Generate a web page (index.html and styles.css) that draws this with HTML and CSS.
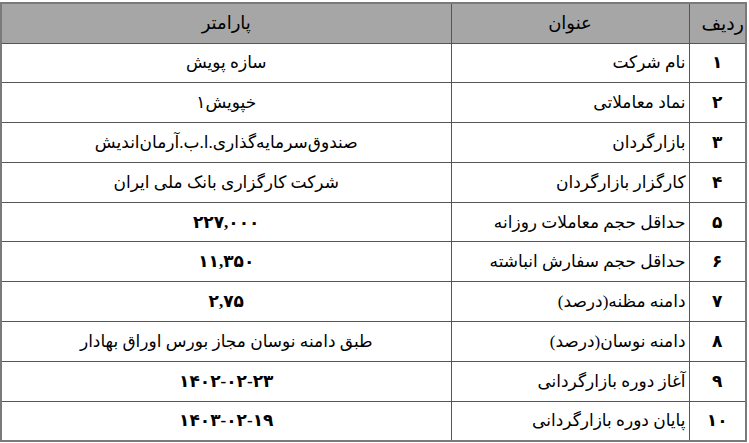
FILE: index.html
```html
<!DOCTYPE html>
<html lang="fa" dir="rtl">
<head>
<meta charset="utf-8">
<link rel="stylesheet" href="styles.css">
</head>
<body>
<table class="grid">
  <colgroup>
    <col class="c-num">
    <col class="c-title">
    <col class="c-param">
  </colgroup>
  <thead>
    <tr class="head">
      <th class="num-h">ردیف</th>
      <th>عنوان</th>
      <th>پارامتر</th>
    </tr>
  </thead>
  <tbody>
    <tr><td class="num">۱</td><td class="title">نام شرکت</td><td class="param">سازه پویش</td></tr>
    <tr><td class="num">۲</td><td class="title">نماد معاملاتی</td><td class="param">خپویش۱</td></tr>
    <tr><td class="num">۳</td><td class="title">بازارگردان</td><td class="param">صندوق‌سرمایه‌گذاری.ا.ب.آرمان‌اندیش</td></tr>
    <tr><td class="num">۴</td><td class="title">کارگزار بازارگردان</td><td class="param">شرکت کارگزاری بانک ملی ایران</td></tr>
    <tr><td class="num">۵</td><td class="title">حداقل حجم معاملات روزانه</td><td class="param b">۲۲۷,۰۰۰</td></tr>
    <tr><td class="num">۶</td><td class="title">حداقل حجم سفارش انباشته</td><td class="param b">۱۱,۳۵۰</td></tr>
    <tr><td class="num">۷</td><td class="title">دامنه مظنه(درصد)</td><td class="param b">۲,۷۵</td></tr>
    <tr><td class="num">۸</td><td class="title">دامنه نوسان(درصد)</td><td class="param">طبق دامنه نوسان مجاز بورس اوراق بهادار</td></tr>
    <tr><td class="num">۹</td><td class="title">آغاز دوره بازارگردانی</td><td class="param b"><span dir="ltr" class="ltr">۱۴۰۲-۰۲-۲۳</span></td></tr>
    <tr><td class="num">۱۰</td><td class="title">پایان دوره بازارگردانی</td><td class="param b"><span dir="ltr" class="ltr">۱۴۰۳-۰۲-۱۹</span></td></tr>
  </tbody>
</table>
</body>
</html>
```
FILE: styles.css
```css
html, body {
  margin: 0;
  padding: 0;
  background: #ffffff;
}
body {
  padding: 2px 2px 0 2px;
  font-family: "Liberation Serif", "DejaVu Sans", serif;
  color: #000;
}
.grid {
  width: 745px;
  border-collapse: collapse;
  table-layout: fixed;
  border: 2px solid #7a7a7a;
  font-size: 17px;
}
.c-num { width: 57px; }
.c-title { width: 238px; }
.c-param { width: 450px; }
.grid th, .grid td {
  border: 1px solid #555;
  padding: 0 3px;
  overflow: hidden;
  white-space: nowrap;
}
.head {
  height: 40px;
  background: #a6a6a6;
}
.grid th {
  font-weight: normal;
  font-size: 18px;
  text-align: center;
}
.grid th.num-h {
  text-align: right;
  padding-right: 1px;
  font-size: 19px;
}
.grid tbody tr {
  height: 39.8px;
}
.num {
  text-align: center;
  font-weight: bold;
}
.title {
  text-align: right;
  padding-right: 2px;
}
.param {
  text-align: center;
}
.b {
  font-weight: bold;
}
.ltr {
  unicode-bidi: isolate;
}
```
